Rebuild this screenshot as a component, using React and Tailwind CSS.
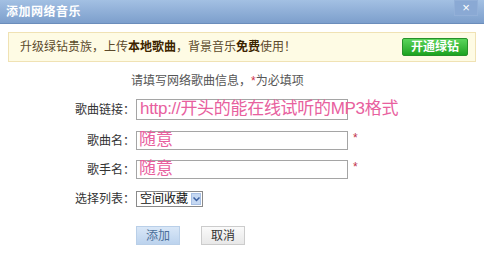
import React from "react";

const font = { fontFamily: '"Liberation Sans", "Noto Sans CJK SC", sans-serif' };

const Field = ({ label, value, star, wide }) => (
  <div className="flex items-center">
    <div className="w-[136px] pr-[1px] text-right text-[12px] text-[#333]">{label}</div>
    <div className="relative w-[212px] h-[19px] border border-[#a5a5a5] bg-white">
      <span className="absolute left-[2px] top-[-3px] whitespace-nowrap text-[17px] leading-[22px] text-[#e8609e]">
        {value}
      </span>
    </div>
    {star && <span className="ml-[5px] -mt-[6px] text-[12px] text-[#c0304a]">*</span>}
  </div>
);

export default function App() {
  return (
    <div className="w-[484px] h-[278px] bg-white overflow-hidden" style={font}>
      {/* title bar */}
      <div className="flex items-center justify-between h-[24px] bg-gradient-to-b from-[#a3c0e3] to-[#7d9fcc] border-b border-[#6b8dbb] pl-[6px] pr-[6px]">
        <span className="text-[12px] font-bold text-white tracking-[0.5px]">添加网络音乐</span>
        <div className="flex items-center justify-center w-[24px] h-[16px] -mt-[8px] border border-[#93b0d8] bg-[#8aa9d4] text-white text-[13px] leading-none">
          ×
        </div>
      </div>

      {/* banner */}
      <div className="mx-[8px] mt-[8px] h-[30px] flex items-center justify-between border border-[#f0e2b4] bg-[#fefbe4] pl-[11px] pr-[7px]">
        <span className="text-[12px] text-[#5c4a2c]">
          升级绿钻贵族，上传<b className="text-[#3c2400]">本地歌曲</b>，背景音乐<b className="text-[#3c2400]">免费</b>使用！
        </span>
        <div className="flex items-center justify-center w-[66px] h-[18px] rounded-[2px] border border-[#27912a] bg-gradient-to-b from-[#5ad55a] to-[#1aa31f] text-white text-[12px] font-bold">
          开通绿钻
        </div>
      </div>

      <div className="mt-[10px] pl-[131px] text-[12px] text-[#555]">
        请填写网络歌曲信息，<span className="text-[#d0304a]">*</span>为必填项
      </div>

      <div className="mt-[9px] flex flex-col">
        <div className="flex items-center">
          <div className="w-[136px] pr-[1px] text-right text-[12px] text-[#333]">歌曲链接：</div>
          <div className="relative w-[212px] h-[21px] border border-[#a5a5a5] bg-white">
            <span className="absolute left-[3px] top-[-2px] whitespace-nowrap text-[17px] leading-[22px] text-[#e8609e] tracking-[-0.3px]">
              http://开头的能在线试听的MP3格式
            </span>
          </div>
        </div>
        <div className="mt-[11px]">
          <Field label="歌曲名：" value="随意" star />
        </div>
        <div className="mt-[10px]">
          <Field label="歌手名：" value="随意" star />
        </div>
        <div className="mt-[11px] flex items-center">
          <div className="w-[136px] pr-[1px] text-right text-[12px] text-[#333]">选择列表：</div>
          <div className="flex items-center w-[67px] h-[16px] border border-[#8a8a8a] bg-white">
            <span className="flex-1 pl-[3px] text-[12px] leading-none text-[#111]">空间收藏</span>
            <div className="flex items-center justify-center w-[10px] h-[12px] mr-[1px] bg-[#c5d8f2] border border-[#a8c0e4]">
              <svg width="7" height="5" viewBox="0 0 7 5">
                <path d="M0.5 0.5 L3.5 3.5 L6.5 0.5" stroke="#3a5fa0" strokeWidth="1.5" fill="none" />
              </svg>
            </div>
          </div>
        </div>
        <div className="mt-[18px] pl-[136px] flex gap-[21px]">
          <div className="flex items-center justify-center w-[44px] h-[19px] border border-[#b9cfe8] bg-gradient-to-b from-[#d9e7f7] to-[#bcd3ee] text-[12px] text-[#4a6e98]">
            添加
          </div>
          <div className="flex items-center justify-center w-[44px] h-[19px] border border-[#cccccc] bg-gradient-to-b from-[#fafafa] to-[#e8e8e8] text-[12px] text-[#333]">
            取消
          </div>
        </div>
      </div>
    </div>
  );
}
